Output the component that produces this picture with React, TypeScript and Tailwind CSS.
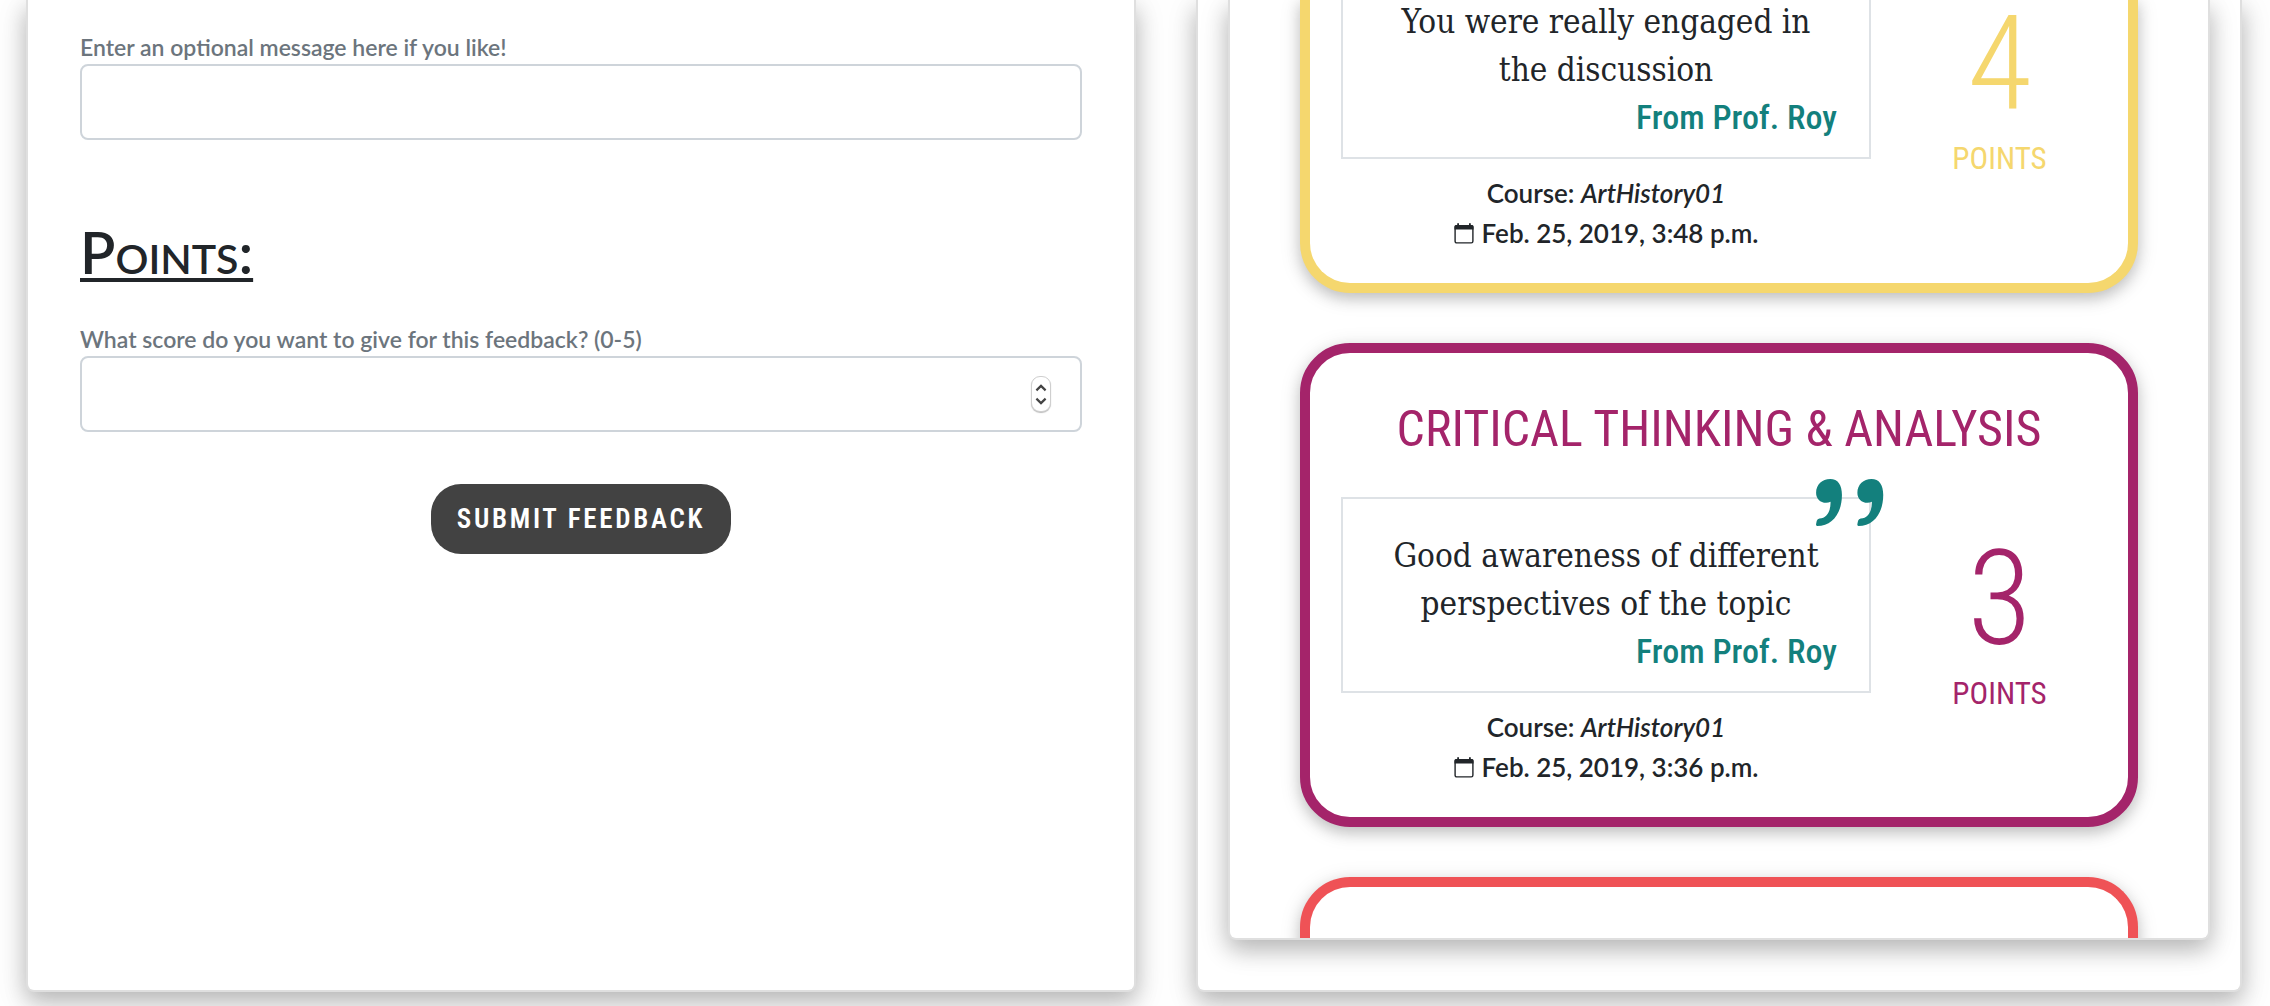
import type { ReactNode } from 'react';

const panelShadow = 'shadow-[0_10px_22px_rgba(0,0,0,0.18),0_8px_30px_rgba(0,0,0,0.15)]';
const cardShadow = 'shadow-[0_6px_14px_rgba(0,0,0,0.17),0_4px_22px_rgba(0,0,0,0.12)]';
const condensed = "font-['Roboto_Condensed','Liberation_Sans',sans-serif]";
const slab = "font-['DejaVu_Serif_Condensed','DejaVu_Serif',serif]";

function CalendarIcon() {
  return (
    <svg width="20" height="21" viewBox="0 0 20 21" aria-hidden="true" className="mr-2 shrink-0">
      <rect x="1.1" y="2.6" width="17.8" height="17.3" rx="1.6" fill="none" stroke="currentColor" strokeWidth="1.4" />
      <path d="M0.5 6.5V3.6Q.5 2 2.1 2H17.9Q19.5 2 19.5 3.6V6.5Z" fill="currentColor" />
      <path d="M3.2 0.3H5V2.5H3.2ZM15 0.3H16.8V2.5H15Z" fill="currentColor" />
    </svg>
  );
}

function QuoteIcon() {
  const mark =
    'M0 41C0 17 18 0 42 0C65 0 77 17 77 48C77 100 50 140 3 140Q-1 139 0 134L2 124Q4 119 10 118C32 117 44 95 43 68Q37 71 30 71C12 71 0 59 0 41Z';
  return (
    <svg
      viewBox="0 0 202 140"
      aria-hidden="true"
      className="absolute -top-5 -right-[15px] h-[47px] w-[68px] fill-[#13807d]"
    >
      <path d={mark} />
      <path d={mark} transform="translate(123 0)" />
    </svg>
  );
}

function Stepper() {
  return (
    <div className="absolute inset-y-0 right-[31px] flex items-center">
      <div className="flex h-9 w-5 flex-col overflow-hidden rounded-[9px] border border-[#cfcfcf] bg-white shadow-[0_1px_1px_rgba(0,0,0,0.25)]">
        <button type="button" aria-label="Increase score" className="flex flex-1 items-center justify-center pt-1">
          <svg width="12" height="8" viewBox="0 0 12 8" fill="none" stroke="#444" strokeWidth="2.2">
            <path d="M1.4 6.4L6 1.9L10.6 6.4" />
          </svg>
        </button>
        <button type="button" aria-label="Decrease score" className="flex flex-1 items-center justify-center pb-1">
          <svg width="12" height="8" viewBox="0 0 12 8" fill="none" stroke="#444" strokeWidth="2.2">
            <path d="M1.4 1.6L6 6.1L10.6 1.6" />
          </svg>
        </button>
      </div>
    </div>
  );
}

function FeedbackForm() {
  const label = 'mb-0.5 block text-[23px] leading-[30px] font-semibold text-[#6c757d]';
  const field =
    'block h-[76px] w-full rounded-lg border-2 border-[#ced4da] bg-white px-6 text-[26px] text-[#212529] outline-none';
  return (
    <form className="flex flex-col px-[52px] pt-8" onSubmit={(e) => e.preventDefault()}>
      <label htmlFor="message" className={label}>
        Enter an optional message here if you like!
      </label>
      <input id="message" type="text" className={field} />
      <h2 className="mt-[74px] mb-[34px] text-[58px] leading-[76px] font-semibold underline decoration-4 underline-offset-4 [font-variant-caps:small-caps] [text-decoration-skip-ink:none]">
        Points:
      </h2>
      <label htmlFor="score" className={label}>
        What score do you want to give for this feedback? (0-5)
      </label>
      <div className="relative">
        <input
          id="score"
          type="number"
          min={0}
          max={5}
          className={`${field} [appearance:textfield] [&::-webkit-inner-spin-button]:appearance-none`}
        />
        <Stepper />
      </div>
      <button
        type="submit"
        className={`mt-[52px] h-[70px] self-center rounded-[30px] bg-[#424242] px-[26px] text-[27px] font-semibold tracking-widest text-white ${condensed}`}
      >
        SUBMIT FEEDBACK
      </button>
    </form>
  );
}

type CardProps = {
  score: number;
  course: string;
  date: string;
  children: ReactNode;
  title?: string;
  frame: string;
  ink: string;
};

function FeedbackCard({ score, course, date, children, title, frame, ink }: CardProps) {
  return (
    <article className={`border-[10px] bg-white px-[31px] pb-[30px] ${cardShadow} ${frame}`}>
      {title && (
        <h3 className={`pt-11 text-center text-[50px] leading-[64px] whitespace-nowrap ${condensed} ${ink}`}>{title}</h3>
      )}
      <div className="grid grid-cols-[530fr_226fr]">
        <div className="text-center">
          <div className={`relative border-2 border-[#dee2e6] px-8 pb-[17px] ${title ? 'mt-9 pt-[33px]' : 'border-t-0'}`}>
            {title && <QuoteIcon />}
            <p className={`text-[33px] leading-[48px] ${slab}`}>{children}</p>
            <p className={`text-right text-[34px] leading-[46px] font-medium text-[#13807d] ${condensed}`}>
              From Prof. Roy
            </p>
          </div>
          <p className="mt-[14px] text-[26px] leading-10 font-semibold">
            Course: <em>{course}</em>
          </p>
          <p className="flex items-center justify-center text-[26px] leading-10 font-semibold">
            <CalendarIcon />
            {date}
          </p>
        </div>
        <div className={`flex flex-col items-center pl-[31px] ${title ? 'pt-[61px]' : '-mt-[11px]'} ${condensed} ${ink}`}>
          <span className="text-[132px] leading-[154px] font-light">{score}</span>
          <span className="text-[31px] leading-9">POINTS</span>
        </div>
      </div>
    </article>
  );
}

export default function App() {
  return (
    <main className="grid h-screen grid-cols-[1110fr_1046fr] gap-[60px] overflow-hidden bg-[#fefefe] pr-7 pb-[14px] pl-[26px] font-['Lato','Open_Sans',sans-serif] text-[#212529]">
      <section className={`min-h-0 rounded-b-lg border-2 border-t-0 border-[#dfdfdf] bg-white ${panelShadow}`}>
        <FeedbackForm />
      </section>
      <section
        className={`flex min-h-0 flex-col rounded-b-lg border-2 border-t-0 border-[#dfdfdf] bg-white px-[30px] pb-[50px] ${panelShadow}`}
      >
        <div
          className={`min-h-0 flex-1 overflow-hidden rounded-b-lg border-2 border-t-0 border-[#dfdfdf] bg-white px-[70px] ${panelShadow}`}
        >
          <div className="-mt-0.5 flex flex-col gap-[50px]">
            <FeedbackCard
              score={4}
              course="ArtHistory01"
              date="Feb. 25, 2019, 3:48 p.m."
              frame="rounded-b-[50px] border-t-0 border-[#f5d76e]"
              ink="text-[#f5d76e]"
            >
              You were really engaged in the discussion
            </FeedbackCard>
            <FeedbackCard
              title="CRITICAL THINKING & ANALYSIS"
              score={3}
              course="ArtHistory01"
              date="Feb. 25, 2019, 3:36 p.m."
              frame="rounded-[50px] border-[#a4246a]"
              ink="text-[#a4246a]"
            >
              Good awareness of different perspectives of the topic
            </FeedbackCard>
            <div className={`h-[200px] rounded-t-[50px] border-[10px] border-b-0 border-[#ef5256] bg-white ${cardShadow}`} />
          </div>
        </div>
      </section>
    </main>
  );
}
